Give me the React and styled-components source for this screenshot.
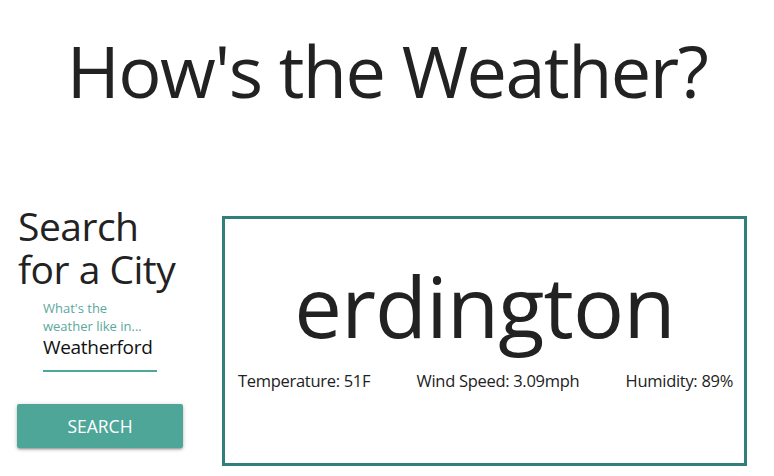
import React from 'react';
import styled, { createGlobalStyle } from 'styled-components';

const GlobalStyle = createGlobalStyle`
  body {
    margin: 0;
    background: #ffffff;
    font-family: "Open Sans", "Noto Sans", sans-serif;
    color: #212121;
  }
`;

const App = () => {
  const stats = [
    { id: 1, label: 'Temperature', value: '51F' },
    { id: 2, label: 'Wind Speed', value: '3.09mph' },
    { id: 3, label: 'Humidity', value: '89%' },
  ];

  return (
    <Page>
      <GlobalStyle />
      <Title>How's the Weather?</Title>
      <Main>
        <Sidebar>
          <SearchHeading>
            <HeadingLine>Search</HeadingLine>
            <HeadingLine>for a City</HeadingLine>
          </SearchHeading>
          <Field>
            <Label>What's the weather like in...</Label>
            <Input defaultValue="Weatherford" />
          </Field>
          <SearchButton>SEARCH</SearchButton>
        </Sidebar>
        <Card>
          <CityName>erdington</CityName>
          <StatRow>
            {stats.map((stat) => (
              <Stat key={stat.id}>
                {stat.label}: {stat.value}
              </Stat>
            ))}
          </StatRow>
        </Card>
      </Main>
    </Page>
  );
};

export default App;

const Page = styled.div`
  width: 774px;
  height: 476px;
  overflow: hidden;
`;

const Title = styled.h1`
  margin: 0;
  padding-top: 22px;
  text-align: center;
  font-weight: 400;
  font-size: 72px;
  line-height: 96px;
  letter-spacing: -1.5px;
  color: #222222;
`;

const Main = styled.div`
  display: flex;
  align-items: flex-start;
  margin-top: 98px;
  padding-left: 17px;
`;

const Sidebar = styled.div`
  width: 166px;
  display: flex;
  flex-direction: column;
  margin-top: -12px;
`;

const SearchHeading = styled.h2`
  margin: 0;
  padding-left: 1px;
  display: flex;
  flex-direction: column;
  font-weight: 400;
  font-size: 39px;
  letter-spacing: -0.5px;
  color: #222222;
  white-space: nowrap;
`;

const HeadingLine = styled.span`
  display: block;
  height: 43px;
  line-height: 43px;
`;

const Field = styled.div`
  display: flex;
  flex-direction: column;
  width: 114px;
  margin: 9px 0 0 26px;
`;

const Label = styled.label`
  width: 110px;
  font-size: 13px;
  line-height: 18px;
  color: #5aa89e;
`;

const Input = styled.input`
  border: none;
  border-bottom: 2px solid #4da89a;
  outline: none;
  padding: 0 0 11px;
  margin: 0;
  width: 114px;
  font-family: "Open Sans", "Noto Sans", sans-serif;
  font-size: 19px;
  line-height: 24px;
  letter-spacing: -0.3px;
  color: #111111;
  background: transparent;
`;

const SearchButton = styled.button`
  margin-top: 32px;
  width: 166px;
  height: 44px;
  border: none;
  border-radius: 2px;
  background: #4ea699;
  color: #ffffff;
  font-family: "Open Sans", "Noto Sans", sans-serif;
  font-size: 17.5px;
  box-shadow: 0 2px 2px rgba(0, 0, 0, 0.14), 0 3px 1px -2px rgba(0, 0, 0, 0.12),
    0 1px 5px rgba(0, 0, 0, 0.2);
  cursor: pointer;
`;

const Card = styled.div`
  box-sizing: border-box;
  margin-left: 39px;
  width: 525px;
  height: 250px;
  border: 3px solid #307f7b;
  display: flex;
  flex-direction: column;
  align-items: center;
`;

const CityName = styled.div`
  margin-top: 43px;
  font-size: 85px;
  line-height: 86px;
  letter-spacing: -0.8px;
  color: #222222;
`;

const StatRow = styled.div`
  align-self: stretch;
  display: flex;
  justify-content: space-between;
  padding: 0 11px 0 13px;
  margin-top: 22px;
`;

const Stat = styled.span`
  font-size: 16.5px;
  line-height: 22px;
  letter-spacing: -0.3px;
  color: #222222;
`;
